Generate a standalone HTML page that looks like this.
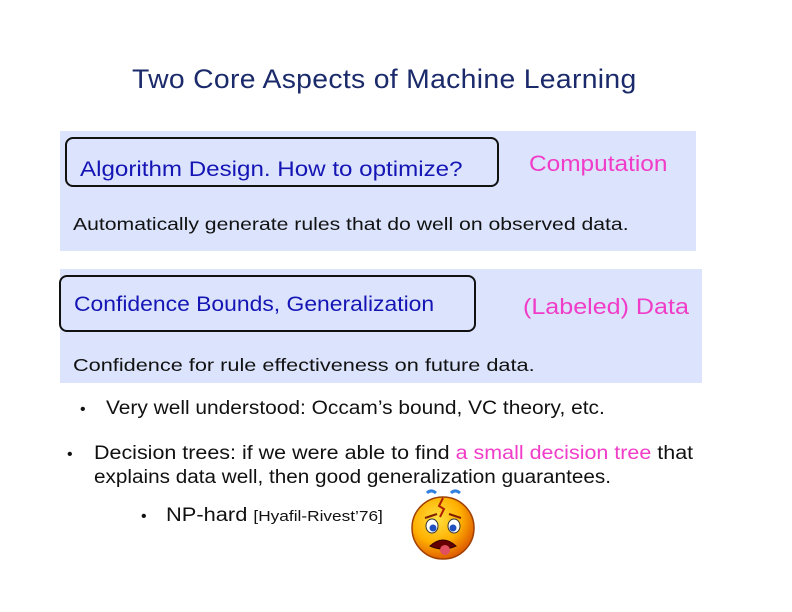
<!DOCTYPE html>
<html><head><meta charset="utf-8"><style>
body{margin:0;width:792px;height:612px;background:#fff;position:relative;overflow:hidden;font-family:"Liberation Sans",sans-serif}
.t{position:absolute;white-space:nowrap;line-height:1;transform-origin:0 0}
.panel{position:absolute;background:#dbe4fc}
.box{position:absolute;border:2px solid #111;border-radius:8px;background:#dbe4fc}
</style></head><body>
<div class="t" style="left:132px;top:66px;font-size:27px;color:#1a2a6a;letter-spacing:0.3px;transform:scaleX(1.05)">Two Core Aspects of Machine Learning</div>

<div class="panel" style="left:60px;top:131px;width:636px;height:120px"></div>
<div class="box" style="left:65px;top:137px;width:430px;height:46px"></div>
<div class="t" style="left:80px;top:159px;font-size:21px;color:#1515b5;transform:scaleX(1.15)">Algorithm Design. How to optimize?</div>
<div class="t" style="left:529px;top:153px;font-size:22px;color:#f03cc8;transform:scaleX(1.11)">Computation</div>
<div class="t" style="left:73px;top:216px;font-size:17.5px;color:#111;transform:scaleX(1.21)">Automatically generate rules that do well on observed data.</div>

<div class="panel" style="left:60px;top:269px;width:642px;height:114px"></div>
<div class="box" style="left:59px;top:275px;width:413px;height:53px"></div>
<div class="t" style="left:74px;top:294px;font-size:21px;color:#1515b5;transform:scaleX(1.09)">Confidence Bounds, Generalization</div>
<div class="t" style="left:523px;top:296px;font-size:22px;color:#f03cc8;transform:scaleX(1.14)">(Labeled) Data</div>
<div class="t" style="left:73px;top:357px;font-size:17.5px;color:#111;transform:scaleX(1.24)">Confidence for rule effectiveness on future data.</div>

<div class="t" style="left:80px;top:402px;font-size:16px;color:#111">•</div>
<div class="t" style="left:106px;top:399px;font-size:19px;color:#111;transform:scaleX(1.10)">Very well understood: Occam’s bound, VC theory, etc.</div>

<div class="t" style="left:67px;top:447px;font-size:16px;color:#111">•</div>
<div class="t" style="left:94px;top:444px;font-size:19px;color:#111;transform:scaleX(1.13)">Decision trees: if we were able to find <span style="color:#f03cc8">a small decision tree</span> that</div>
<div class="t" style="left:94px;top:468px;font-size:19px;color:#111;transform:scaleX(1.09)">explains data well, then good generalization guarantees.</div>

<div class="t" style="left:141px;top:509px;font-size:16px;color:#111">•</div>
<div class="t" style="left:166px;top:506px;font-size:19px;color:#111;transform:scaleX(1.15)">NP-hard <span style="font-size:15px">[Hyafil-Rivest’76]</span></div>

<svg style="position:absolute;left:405px;top:488px" width="76" height="74" viewBox="0 0 76 74">
<defs><radialGradient id="g" cx="40%" cy="35%" r="65%"><stop offset="0" stop-color="#ffe040"/><stop offset="0.6" stop-color="#ffb000"/><stop offset="1" stop-color="#e06000"/></radialGradient></defs>
<circle cx="38" cy="40" r="31" fill="url(#g)" stroke="#a04000" stroke-width="1.5"/>
<path d="M22 5 q4-4 9 0 M46 5 q4-4 9 0" stroke="#3080e0" stroke-width="3" fill="none"/>
<path d="M38 10 l-4 8 l5 3 l-4 8" stroke="#b02000" stroke-width="2" fill="none"/>
<ellipse cx="27" cy="38" rx="6" ry="7" fill="#fff" stroke="#333"/><circle cx="28" cy="40" r="3.5" fill="#2050c0"/>
<ellipse cx="49" cy="38" rx="6" ry="7" fill="#fff" stroke="#333"/><circle cx="48" cy="40" r="3.5" fill="#2050c0"/>
<path d="M20 30 l12 -4 M56 30 l-12 -4" stroke="#802000" stroke-width="2"/>
<path d="M25 58 q13 -12 26 0 q-13 6 -26 0z" fill="#600" stroke="#300"/>
<ellipse cx="40" cy="62" rx="5" ry="5" fill="#e05060"/>
</svg>
</body></html>
